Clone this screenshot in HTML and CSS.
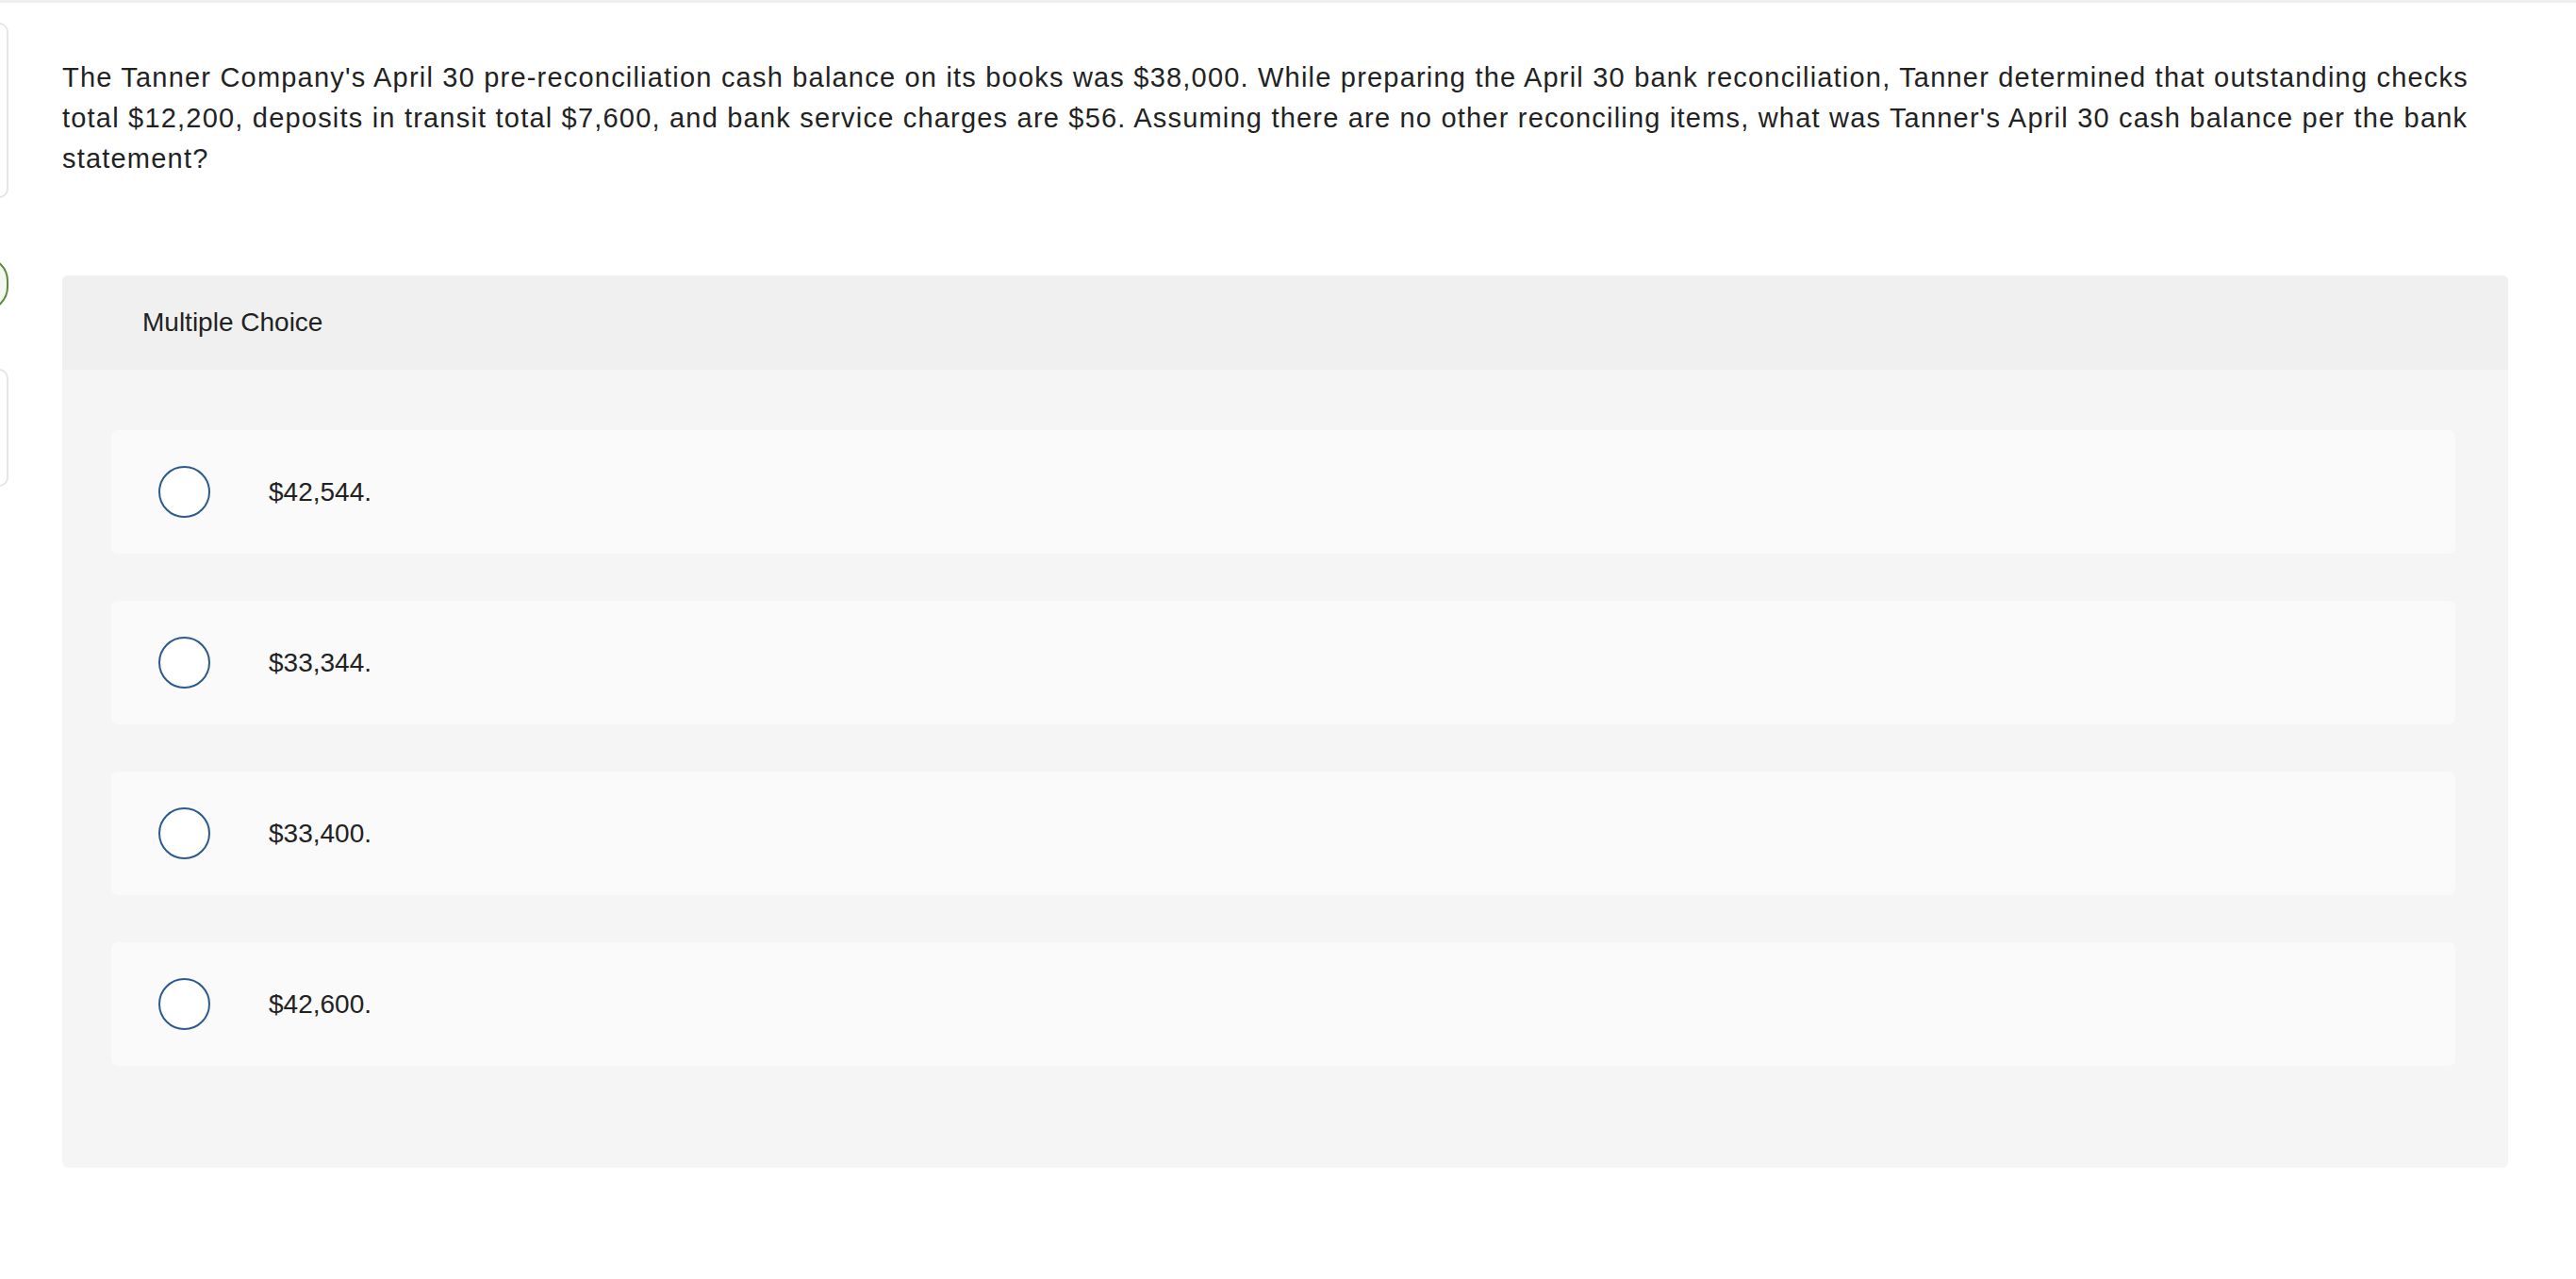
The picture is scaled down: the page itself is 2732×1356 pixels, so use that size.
FILE: index.html
```html
<!DOCTYPE html>
<html lang="en">
<head>
<meta charset="utf-8">
<title>Multiple Choice</title>
<link rel="stylesheet" href="styles.css">
</head>
<body>
<div class="topbar"></div>
<div class="layout">
  <aside class="rail">
    <div class="rail-card rail-card--tall"></div>
    <div class="rail-pill"></div>
    <div class="rail-card rail-card--short"></div>
  </aside>
  <main class="content">
    <p class="question">The Tanner Company's April 30 pre-reconciliation cash balance on its books was $38,000. While preparing the April 30 bank reconciliation, Tanner determined that outstanding checks total $12,200, deposits in transit total $7,600, and bank service charges are $56. Assuming there are no other reconciling items, what was Tanner's April 30 cash balance per the bank statement?</p>
    <section class="panel">
      <header class="panel-head">Multiple Choice</header>
      <div class="panel-body">
        <label class="choice"><span class="radio"></span><span class="choice-text">$42,544.</span></label>
        <label class="choice"><span class="radio"></span><span class="choice-text">$33,344.</span></label>
        <label class="choice"><span class="radio"></span><span class="choice-text">$33,400.</span></label>
        <label class="choice"><span class="radio"></span><span class="choice-text">$42,600.</span></label>
      </div>
    </section>
  </main>
</div>
</body>
</html>
```

FILE: styles.css
```css
* { box-sizing: border-box; }

html, body {
  margin: 0;
  padding: 0;
  background: #ffffff;
}

body {
  font-family: "Liberation Sans", Arial, sans-serif;
  font-size: 28px;
  line-height: 42px;
  color: #222222;
  overflow: hidden;
}

.topbar {
  height: 3px;
  background: #efefef;
}

.layout {
  display: flex;
  align-items: flex-start;
}

.rail {
  width: 9px;
  flex: 0 0 9px;
  overflow: hidden;
  display: flex;
  flex-direction: column;
  padding-top: 21px;
}

.rail-card,
.rail-pill {
  width: 70px;
  margin-left: -61px;
  flex: 0 0 auto;
}

.rail-card {
  border: 2px solid #e6e6e6;
  border-radius: 10px;
  background: #ffffff;
}

.rail-card--tall { height: 186px; }

.rail-pill {
  height: 58px;
  margin-top: 62px;
  border: 2px solid #5b8b3c;
  border-radius: 26px;
  background: #f4f7f1;
}

.rail-card--short {
  height: 125px;
  margin-top: 61px;
}

.content {
  flex: 1 1 auto;
  padding: 0 72px 0 57px;
}

.question {
  margin: 58px 0 102px;
  font-size: 29px;
  line-height: 43px;
  letter-spacing: 1.2px;
}

.panel {
  border-radius: 6px;
  overflow: hidden;
  background: #f5f5f5;
}

.panel-head {
  height: 100px;
  display: flex;
  align-items: center;
  padding-left: 85px;
  background: #f0f0f0;
}

.panel-body {
  display: flex;
  flex-direction: column;
  gap: 50px;
  padding: 64px 56px 108px 52px;
}

.choice {
  height: 131px;
  display: flex;
  align-items: center;
  padding-left: 50px;
  background: #fafafa;
  border-radius: 7px;
}

.radio {
  width: 55px;
  height: 55px;
  flex: 0 0 55px;
  border: 2px solid #2c5a8e;
  border-radius: 50%;
  background: #ffffff;
}

.choice-text {
  margin-left: 62px;
}
```
